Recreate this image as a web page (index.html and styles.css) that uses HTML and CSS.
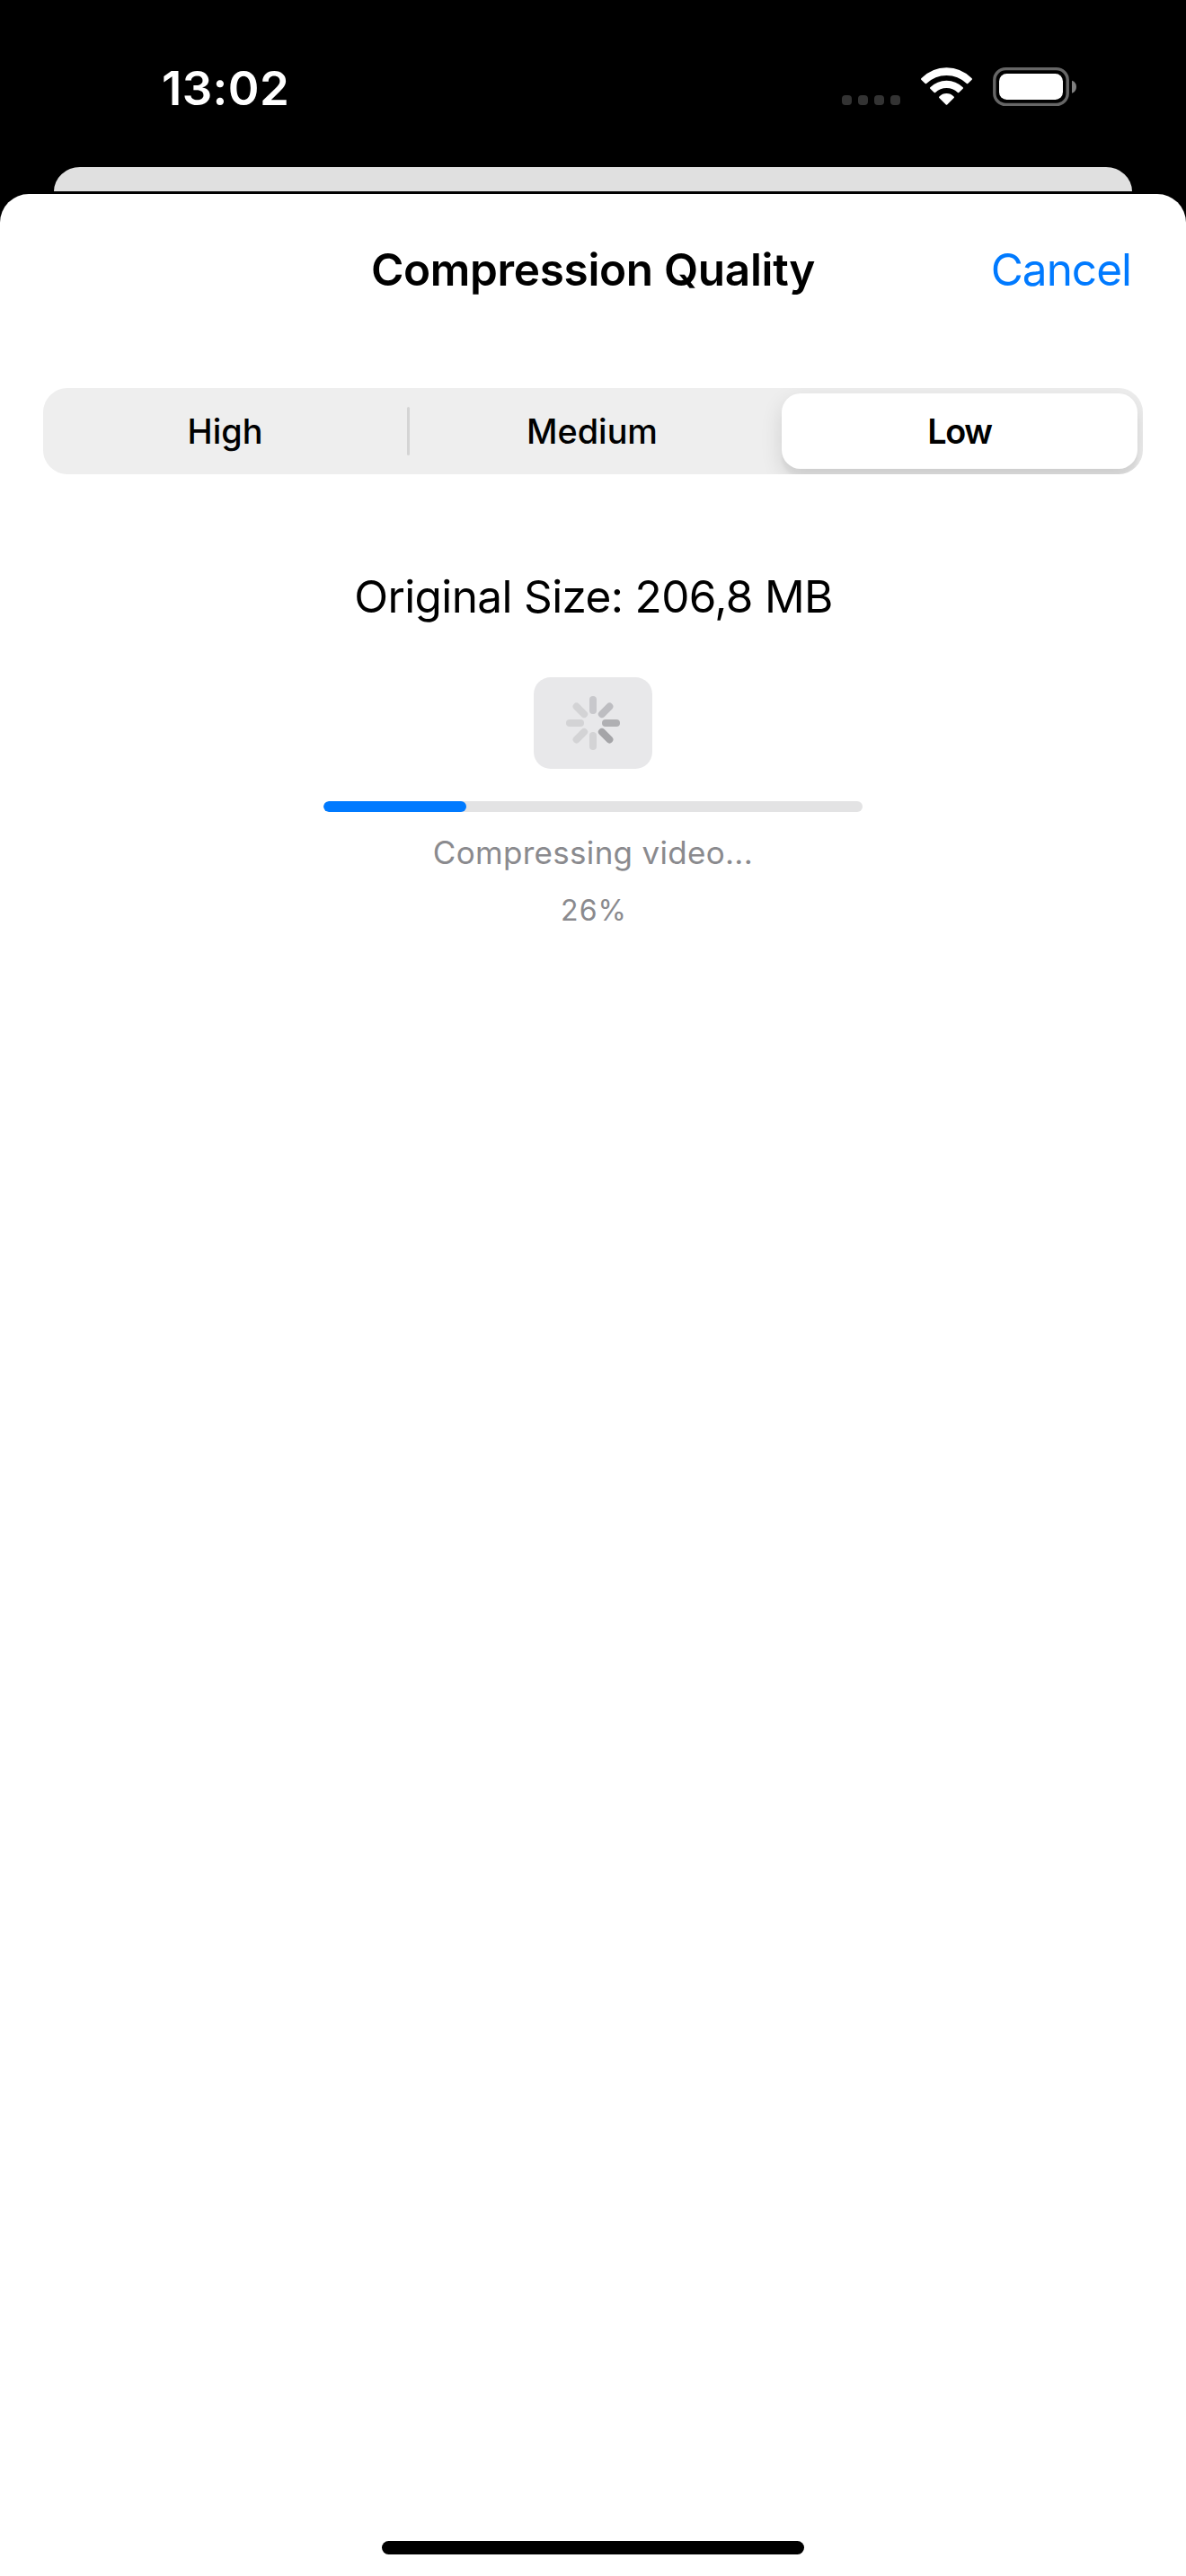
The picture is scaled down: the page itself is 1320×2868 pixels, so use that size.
FILE: index.html
```html
<!DOCTYPE html>
<html lang="en">
<head>
<meta charset="utf-8">
<title>Compression Quality</title>
<link rel="stylesheet" href="styles.css">
</head>
<body>
<div class="screen">
  <header class="status">
    <span class="time">13:02</span>
    <svg class="indicators" width="264" height="46" viewBox="935 73 264 46">
      <g fill="#333">
        <rect x="937" y="106" width="11" height="11" rx="4"/>
        <rect x="955" y="106" width="11" height="11" rx="4"/>
        <rect x="973" y="106" width="11" height="11" rx="4"/>
        <rect x="991" y="106" width="11" height="11" rx="4"/>
      </g>
      <g fill="#fff">
        <path d="M1025.3 87.2Q1037.5 75.3 1053.5 75.3T1081.7 87.2Q1082.3 88 1081.7 88.7L1077.3 93Q1076.6 93.6 1075.9 93Q1066.3 84 1053.5 84T1031.1 93Q1030.4 93.6 1029.7 93L1025.3 88.7Q1024.7 88 1025.3 87.2Z"/>
        <path d="M1035.3 97.3Q1043 89.7 1053.5 89.7T1071.7 97.3Q1072.4 98 1071.7 98.7L1067.3 103Q1066.6 103.6 1065.9 103Q1060.6 98 1053.5 98T1041.1 103Q1040.4 103.6 1039.7 103L1035.3 98.7Q1034.6 98 1035.3 97.3Z"/>
        <path d="M1045.4 107.4Q1048.8 104 1053.5 104T1061.6 107.4Q1062.4 108.1 1061.7 108.9L1054.2 116.4Q1053.5 117 1052.8 116.4L1045.3 108.9Q1044.6 108.1 1045.4 107.4Z"/>
      </g>
      <rect x="1106.8" y="76.6" width="81.4" height="39.8" rx="12.5" fill="none" stroke="#666" stroke-width="3.4"/>
      <rect x="1112" y="82" width="71" height="29" rx="8.5" fill="#fff"/>
      <path d="M1193 89.7Q1198 91.5 1198 96.7T1193 103.7Z" fill="#808080"/>
    </svg>
  </header>
  <div class="back-card"></div>
  <main class="sheet">
    <nav class="nav">
      <h1 class="title">Compression Quality</h1>
      <a class="cancel">Cancel</a>
    </nav>
    <div class="segments">
      <div class="segment high">High</div>
      <div class="divider"></div>
      <div class="segment medium">Medium</div>
      <div class="segment selected">Low</div>
    </div>
    <p class="size">Original Size: 206,8 MB</p>
    <div class="spinner-box">
      <svg width="60" height="60" viewBox="-30 -30 60 60" stroke-width="8" stroke-linecap="round">
        <path d="M0-14V-26" stroke="#c8c8cc"/>
        <path d="M0-14V-26" stroke="#bdbdc1" transform="rotate(45)"/>
        <path d="M0-14V-26" stroke="#b0b0b3" transform="rotate(90)"/>
        <path d="M0-14V-26" stroke="#a5a5a8" transform="rotate(135)"/>
        <path d="M0-14V-26" stroke="#d3d3d5" transform="rotate(180)"/>
        <path d="M0-14V-26" stroke="#d3d3d5" transform="rotate(225)"/>
        <path d="M0-14V-26" stroke="#d3d3d5" transform="rotate(270)"/>
        <path d="M0-14V-26" stroke="#d3d3d5" transform="rotate(315)"/>
      </svg>
    </div>
    <div class="progress"><div class="bar" style="width:26.5%"></div></div>
    <p class="message">Compressing video...</p>
    <p class="percent">26%</p>
    <div class="home"></div>
  </main>
</div>
</body>
</html>
```
FILE: styles.css
```css
* { box-sizing: border-box; }
body { margin: 0; background: #000; font-family: Inter, "Liberation Sans", sans-serif; color: #000; }
h1, p { margin: 0; font-weight: 400; }
svg { display: block; }
.screen { width: 1320px; height: 2868px; display: flex; flex-direction: column; }
.status { height: 186px; padding: 73px 121px 0 180px; display: flex; justify-content: space-between; }
.time { color: #fff; font-size: 52.7px; font-weight: 600; line-height: 50px; letter-spacing: 0.4px; }
.back-card { height: 27px; margin: 0 60px 3px; background: #e0e0e0; border-radius: 29px 29px 0 0 / 27px 27px 0 0; }
.sheet { flex: 1; background: #fff; border-radius: 32px 32px 0 0; display: flex; flex-direction: column; align-items: center; }
.nav { width: 100%; height: 168px; padding: 0 61px 0 61px; display: grid; grid-template-columns: 1fr auto 1fr; align-items: center; }
.title { grid-column: 2; font-size: 49.5px; font-weight: 600; line-height: 60px; letter-spacing: -0.34px; }
.cancel { justify-self: end; font-size: 49.5px; line-height: 60px; letter-spacing: -1px; color: #007aff; }
.segments { width: 1224px; height: 96px; margin-top: 48px; padding: 6px; display: flex; align-items: center; background: #eeeeee; border-radius: 27px; overflow: hidden; }
.segment { height: 84px; line-height: 84px; text-align: center; font-size: 37.8px; font-weight: 500; }
.high { width: 399px; padding-right: 6px; }
.divider { width: 3px; height: 54px; border-radius: 2px; background: #d4d4d4; }
.medium { flex: 1; padding-right: 8px; }
.selected { width: 396px; background: #fff; border-radius: 21px; font-weight: 600; letter-spacing: -1.4px; box-shadow: 0 9px 24px rgba(0,0,0,.12), 0 9px 3px rgba(0,0,0,.04); }
.size { margin-top: 106px; padding-left: 1px; font-size: 49.5px; line-height: 60px; letter-spacing: -0.64px; }
.spinner-box { width: 132px; height: 102px; margin-top: 60px; display: flex; align-items: center; justify-content: center; background: #e8e8ea; border-radius: 19px; }
.progress { width: 600px; height: 12px; margin-top: 36px; background: #e3e3e4; border-radius: 6px; overflow: hidden; }
.bar { height: 12px; border-radius: 6px; background: #007aff; }
.message { margin-top: 24px; font-size: 35px; line-height: 42px; letter-spacing: 0.3px; color: #8a8a8e; }
.percent { margin-top: 24px; padding-left: 2px; font-size: 32px; line-height: 40px; letter-spacing: 1px; color: #8a8a8e; }
.home { width: 470px; height: 15px; margin: auto 0 24px; background: #000; border-radius: 8px; }
```
